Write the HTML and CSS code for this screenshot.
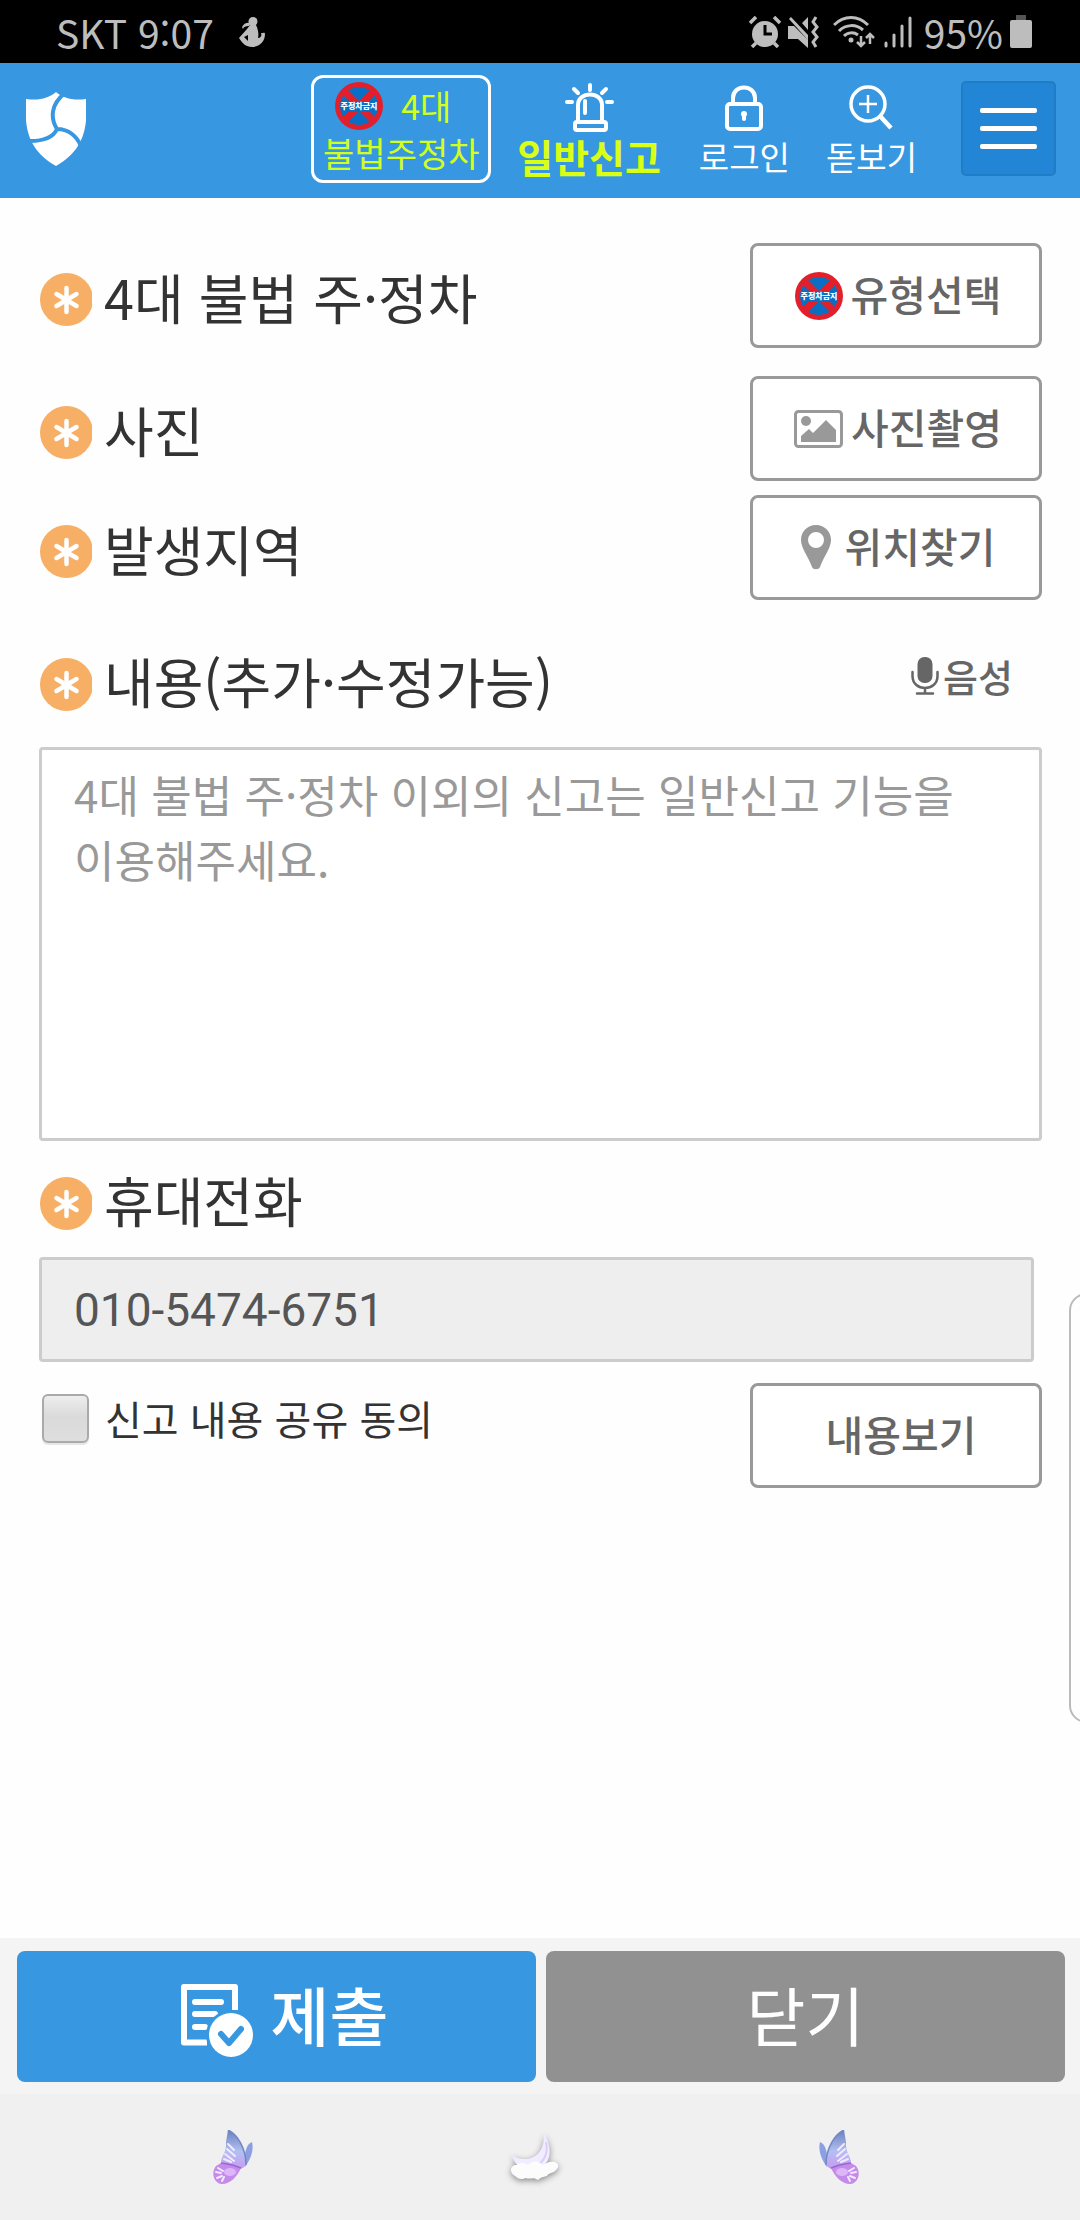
FILE: index.html
```html
<!DOCTYPE html>
<html lang="ko">
<head>
<meta charset="utf-8">
<meta name="viewport" content="width=device-width, initial-scale=1">
<title>4대 불법 주·정차 신고</title>
<link rel="stylesheet" href="styles.css">
</head>
<body>
<svg class="defs" width="0" height="0" aria-hidden="true">
  <symbol id="no-parking" viewBox="0 0 48 48">
    <circle cx="24" cy="24" r="24" fill="#e2202c"/>
    <circle cx="24" cy="24" r="19" fill="#0a6fc2"/>
    <path d="M10 10L38 38M38 10L10 38" stroke="#e2202c" stroke-width="7"/>
    <path d="M7 19h34v10H7z" fill="#0a6fc2"/>
  </symbol>
  <symbol id="required" viewBox="0 0 53 53">
    <circle cx="26.500" cy="26.500" r="26.500" fill="#f6af64"/>
    <path d="M26.500 15v24M16.500 21l20 12M36.500 21l-20 12" stroke="#fff" stroke-width="4.500" stroke-linecap="round"/>
  </symbol>
  <symbol id="butterfly" viewBox="0 0 40 55">
    <path d="M32 34C31 24 33 14 39 12C41 20 38 29 32 37Z" fill="#8b9fe2"/>
    <path d="M15 0C24 4 33 18 33 35C30 39 26 40 23 38L8 33C8 26 14 22 13 12Z" fill="url(#wing)"/>
    <path d="M15 0C24 4 33 18 33 35" fill="none" stroke="#7288c4" stroke-width="1.500"/>
    <path d="M8 33C16 33 24 35 28 38C24 47 17 54 9 54C0 53-2 42 3 36Z" fill="#c48bea"/>
    <path d="M28 38C19 34 14 34 8 33" fill="none" stroke="#9a68d0" stroke-width="1.500"/>
    <path d="M15 14l6 6M14 19l8 7M12 24l9 7M11 29l7 3M5 38l5 3M3 42l5 1M4 48l5-2M9 51l2-4" stroke="#f3e9ff" stroke-width="2" stroke-linecap="round"/>
    <ellipse cx="17" cy="42" rx="6" ry="4" fill="#dcb6f8"/>
  </symbol>
  <linearGradient id="wing" x1="0" y1="0" x2="0" y2="1">
    <stop offset="0" stop-color="#6a80bd"/><stop offset=".55" stop-color="#b3c0f3"/><stop offset="1" stop-color="#c79af0"/>
  </linearGradient>
</svg>

<div class="status">
  <div class="status-side">
    <span>SKT 9:07</span>
    <svg class="santa" viewBox="0 0 26 30" width="26" height="30" fill="currentColor"><circle cx="14" cy="4.500" r="4.500"/><path d="M3 10C5 6 8 5 12 6L11 9C8 9 5 9 4 12ZM11 8h6c2 4 3 9 2 13c3 0 4-3 3-5c2 0 4-1 4 1c0 8-6 13-13 13C7 30 3 26 0 21l8-9Zm-6 12l4 4l0-6Z" fill-rule="evenodd"/></svg>
  </div>
  <div class="status-side status-icons">
    <svg viewBox="0 0 32 32" width="32" height="32" fill="none" stroke="currentColor"><circle cx="16" cy="18" r="13" fill="currentColor" stroke="none"/><path d="M1 7L7 1M25 1l6 6M7 27l-4 4M25 27l4 4" stroke-width="3.500"/><path d="M16 9v9h7" stroke="#000" stroke-width="3"/></svg>
    <svg viewBox="0 0 32 32" width="32" height="32" fill="currentColor"><path d="M0 10h6L20 24v8L10 23H0ZM14 7l6-6v13ZM1 3l2-2L20 19v5Z"/><path d="M28 1l-3 5l4 5l-4 5l4 5l-4 5l3 5" fill="none" stroke="currentColor" stroke-width="3"/></svg>
    <svg class="wifi" viewBox="0 0 42 32" width="42" height="32" fill="none" stroke="currentColor" stroke-width="3"><path d="M1 9C11-1 25-1 35 9M6 15c7-7 17-7 24-1M11 20c4-4 10-4 14-1"/><circle cx="18" cy="24" r="2.500" fill="currentColor" stroke="none"/><path d="M28 20v10M24 26l4 4l4-4M37 28V18M33 22l4-4l4 4" stroke-width="2.500"/></svg>
    <svg class="signal" viewBox="0 0 28 32" width="28" height="32" stroke="currentColor" stroke-width="3" stroke-linecap="round"><path d="M2 27v3M10 19v11M18 10v20M26 2v28"/></svg>
    <span class="percent">95%</span>
    <svg viewBox="0 0 22 33" width="22" height="33"><path d="M6 0h10v6H6z" fill="#555"/><rect y="5" width="22" height="28" rx="2" fill="currentColor"/></svg>
  </div>
</div>

<header class="topbar">
  <a class="logo" href="#" aria-label="안전신문고 홈">
    <svg viewBox="0 0 60 74" width="60" height="74"><path d="M30 0C37 6 47 9 60 7C62 36 58 58 30 74C2 58-2 36 0 7C13 9 23 6 30 0Z" fill="#fff"/><path d="M39 1C25 12 24 26 31 37M4 49C17 49 27 46 31 37M31 37C43 37 51 45 55 54" fill="none" stroke="#3897e1" stroke-width="4"/></svg>
  </a>
  <nav class="menu">
    <a class="badge" href="#">
      <span class="badge-top"><svg class="sign" width="48" height="48"><use href="#no-parking"/><text x="24" y="27" text-anchor="middle">주정차금지</text></svg>4대</span>
      <span>불법주정차</span>
    </a>
    <a class="item item-active" href="#">
      <svg viewBox="0 0 49 49" width="49" height="49" fill="none" stroke="currentColor" stroke-width="4" stroke-linecap="round"><path d="M13 38V22C13 8 37 8 37 22V38M20 18v12"/><rect x="10" y="39" width="31" height="8" rx="2"/><path d="M25 2v5M9 6l4 4M41 6l-4 4M2 19h5M42 19h5"/></svg>
      <span>일반신고</span>
    </a>
    <a class="item" href="#">
      <svg viewBox="0 0 38 49" width="38" height="49" fill="none" stroke="currentColor" stroke-width="4"><rect x="2" y="21" width="34" height="25" rx="3"/><path d="M8 20V15C8 1 30 1 30 15v5"/><path d="M19 31v5" stroke-linecap="round"/><circle cx="19" cy="31" r="1"/></svg>
      <span>로그인</span>
    </a>
    <a class="item" href="#">
      <svg viewBox="0 0 44 49" width="44" height="49" fill="none" stroke="currentColor"><circle cx="19" cy="21" r="17" stroke-width="3.500"/><path d="M31 33l11 12" stroke-width="4.500"/><path d="M19 12v18M10 21h18" stroke-width="2.500"/></svg>
      <span>돋보기</span>
    </a>
    <button class="hamburger" type="button" aria-label="메뉴"><i></i><i></i><i></i></button>
  </nav>
</header>

<main class="form">
  <div class="row">
    <span class="label"><svg width="52" height="53" viewBox="0 0 52 53" aria-hidden="true"><use href="#required" width="53" height="53"/></svg>4대 불법 주·정차</span>
    <button class="action" type="button"><svg class="sign" width="48" height="48"><use href="#no-parking"/><text x="24" y="27" text-anchor="middle">주정차금지</text></svg>유형선택</button>
  </div>
  <div class="row row-gap">
    <span class="label"><svg width="52" height="53" viewBox="0 0 52 53" aria-hidden="true"><use href="#required" width="53" height="53"/></svg>사진</span>
    <button class="action" type="button"><svg viewBox="0 0 49 38" width="49" height="38" aria-hidden="true"><rect x="1.500" y="1.500" width="46" height="35" rx="3" fill="none" stroke="#999" stroke-width="3"/><circle cx="12" cy="11" r="5" fill="#999"/><path d="M7 32v-6l8-7l4 4L32 10l10 10v12Z" fill="#999"/></svg>사진촬영</button>
  </div>
  <div class="row row-tight">
    <span class="label"><svg width="52" height="53" viewBox="0 0 52 53" aria-hidden="true"><use href="#required" width="53" height="53"/></svg>발생지역</span>
    <button class="action action-pin" type="button"><svg viewBox="0 0 30 45" width="30" height="45" aria-hidden="true"><path d="M15 0C6 0 0 7 0 15c0 8 7 16 11 27c1 3 7 3 8 0C23 31 30 23 30 15C30 7 24 0 15 0Zm0 7a8 8 0 0 1 0 16a8 8 0 0 1 0-16Z" fill="#999" fill-rule="evenodd"/></svg>위치찾기</button>
  </div>
  <div class="row row-content">
    <label class="label" for="content"><svg width="52" height="53" viewBox="0 0 52 53" aria-hidden="true"><use href="#required" width="53" height="53"/></svg>내용(추가·수정가능)</label>
    <button class="voice" type="button"><svg viewBox="0 0 28 38" width="28" height="38" fill="none" stroke="currentColor" stroke-width="2.500" stroke-linecap="round" aria-hidden="true"><rect x="6.500" y="0" width="15" height="26" rx="7" fill="currentColor" stroke="none"/><path d="M1.500 15v4c0 16 25 16 25 0v-4M14 31v5M6 36.500h16"/></svg>음성</button>
  </div>
  <textarea class="content" id="content" placeholder="4대 불법 주·정차 이외의 신고는 일반신고 기능을 이용해주세요."></textarea>
  <div class="row row-phone">
    <label class="label" for="phone"><svg width="52" height="53" viewBox="0 0 52 53" aria-hidden="true"><use href="#required" width="53" height="53"/></svg>휴대전화</label>
  </div>
  <input class="phone" id="phone" type="tel" value="010-5474-6751" readonly>
  <div class="row row-agree">
    <div class="agree">
      <input class="check" id="agree" type="checkbox">
      <label for="agree">신고 내용 공유 동의</label>
    </div>
    <button class="action action-plain" type="button">내용보기</button>
  </div>
</main>
<div class="edge-handle"></div>

<footer class="submit-bar">
  <button class="submit" type="button"><svg viewBox="0 0 72 73" width="72" height="73" aria-hidden="true" fill="none" stroke="#fff" stroke-linecap="round"><path d="M26 58.500H3V3H54V26" stroke-width="6" stroke-linecap="butt" stroke-linejoin="round"/><path d="M14 18H40M14 30H34M14 43H24" stroke-width="6"/><circle cx="50" cy="51" r="25" fill="#3897e1" stroke="none"/><circle cx="50" cy="51" r="22" fill="#fff" stroke="none"/><path d="M40 50l8 9l12-14" stroke="#3897e1" stroke-width="6" stroke-linejoin="round"/></svg>제출</button>
  <button class="close" type="button">닫기</button>
</footer>

<nav class="system-nav">
  <button type="button" aria-label="최근 앱"><svg viewBox="0 0 40 55" width="40" height="55"><use href="#butterfly"/></svg></button>
  <button type="button" aria-label="홈"><svg class="moon" viewBox="0 0 50 46" width="50" height="46"><path d="M33 0C42 14 40 28 30 34H10C6 32 3 27 1 22C18 30 34 22 33 0Z" fill="#f1ecff"/><path d="M35 8C38 20 32 29 24 32" fill="none" stroke="#d9cef5" stroke-width="2"/><path d="M4 42C-3 38 0 30 6 31C9 27 15 29 17 31C22 26 29 27 31 31C35 30 36 28 40 28C46 27 50 32 45 36C42 40 38 38 36 42C32 43 30 43 27 46C22 42 19 46 15 44C10 46 7 45 4 42Z" fill="#fcfcfd"/></svg></button>
  <button type="button" aria-label="뒤로"><svg viewBox="0 0 40 55" width="40" height="55"><use href="#butterfly" transform="translate(40 0) scale(-1 1)"/></svg></button>
</nav>
</body>
</html>
```
FILE: styles.css
```css
* { box-sizing: border-box; }

body {
  display: flex;
  flex-direction: column;
  min-height: 100vh;
  margin: 0;
  background: #fefefe;
  color: #333;
  font-family: "Noto Sans CJK KR", "Noto Sans", sans-serif;
}

button, input, textarea { font-family: inherit; }
button { border: 0; padding: 0; background: none; cursor: pointer; }
a { color: inherit; text-decoration: none; }
svg { flex: none; display: block; }
.defs { position: absolute; }
.sign text { fill: #fff; font-size: 8px; font-weight: 900; }

/* Phone status bar */
.status {
  display: flex;
  justify-content: space-between;
  height: 63px;
  padding: 0 48px 0 56px;
  background: #000;
  color: #bdbdbd;
  font-size: 39px;
  line-height: 60px;
}
.status-side { display: flex; align-items: center; }
.santa { margin-left: 25px; }
.status-icons { gap: 7px; }
.wifi { margin-left: 6px; }
.signal { margin-left: 2px; }
.percent { margin-left: 5px; }

/* App header */
.topbar {
  display: flex;
  align-items: center;
  justify-content: space-between;
  height: 135px;
  padding: 0 24px 4px 26px;
  background: #3897e1;
  color: #fff;
}
.menu { display: flex; align-items: center; font-size: 33px; line-height: 38px; }
.badge {
  display: flex;
  flex-direction: column;
  align-items: center;
  width: 180px;
  height: 108px;
  margin-right: 8px;
  border: 3px solid #fff;
  border-radius: 12px;
  color: #d2ff1e;
  font-size: 34px;
}
.badge-top { display: flex; align-items: center; gap: 18px; height: 56px; margin-right: 16px; }
.item {
  display: flex;
  flex-direction: column;
  align-items: center;
  gap: 5px;
  padding: 0 18px;
}
.item-active { margin-right: 2px; }
.item-active span { color: #d9ff14; font-size: 39px; font-weight: 700; }
.hamburger {
  display: flex;
  flex-direction: column;
  align-items: center;
  justify-content: center;
  gap: 13px;
  width: 95px;
  height: 95px;
  margin-left: 26px;
  border: 2px solid #1f7cc6;
  border-radius: 5px;
  background: #2385d5;
}
.hamburger i { width: 57px; height: 5px; border-radius: 2px; background: #fff; }

/* Report form */
.form { flex: 1; padding: 45px 38px 0 39px; }
.row { display: flex; align-items: center; justify-content: space-between; }
.row-gap { margin-top: 28px; }
.row-tight { margin-top: 14px; }
.row-content { margin: 49px 0 36px; }
.row-phone { margin: 27px 0; }
.row-agree { align-items: flex-start; margin-top: 21px; }
.label {
  display: flex;
  align-items: center;
  gap: 12px;
  padding-top: 2px;
  font-size: 54px;
  line-height: 60px;
  white-space: nowrap;
}
.label svg { margin: 6px 0 0 1px; }
.action {
  display: flex;
  align-items: center;
  justify-content: center;
  gap: 8px;
  width: 292px;
  height: 105px;
  padding: 0 0 6px 4px;
  border: 3px solid #999;
  border-radius: 8px;
  background: #fff;
  color: #666;
  font-size: 41px;
  font-weight: 500;
  line-height: 48px;
}
.action svg { margin-top: 6px; }
.action-pin { gap: 14px; }
.action-plain { padding-left: 10px; }
.voice {
  display: flex;
  align-items: center;
  gap: 4px;
  margin-right: 29px;
  padding-bottom: 8px;
  color: #666;
  font-size: 38px;
  font-weight: 500;
  line-height: 48px;
}
.content {
  display: block;
  width: 100%;
  height: 394px;
  padding: 12px 32px;
  border: 3px solid #ccc;
  border-radius: 4px;
  background: #fff;
  color: #333;
  font-size: 44px;
  line-height: 65px;
  word-break: keep-all;
  resize: none;
}
.content::placeholder { color: #999; opacity: 1; }
.phone {
  display: block;
  width: calc(100% - 8px);
  height: 105px;
  padding: 0 32px;
  border: 3px solid #ccc;
  border-radius: 4px;
  background: #eee;
  color: #555;
  font-family: Roboto, sans-serif;
  font-size: 46px;
}
.agree {
  display: flex;
  align-items: center;
  gap: 16px;
  padding: 11px 0 0 3px;
  font-size: 40px;
  line-height: 49px;
}
.check {
  appearance: none;
  width: 47px;
  height: 49px;
  margin: 0;
  border: 2px solid #aaa;
  border-radius: 6px;
  background: linear-gradient(#eee, #dadada 45%, #dedede);
  box-shadow: 0 2px 1px #e6e6e6;
}

/* Edge panel grip that overlaps the right side of the screen */
.edge-handle {
  position: fixed;
  top: 1293px;
  right: -24px;
  width: 35px;
  height: 430px;
  border: 2px solid #bbb;
  border-radius: 18px;
  background: #fefefe;
}

/* Bottom actions */
.submit-bar {
  display: grid;
  grid-template-columns: 1fr 1fr;
  gap: 10px;
  padding: 13px 15px 12px 17px;
  background: #f4f4f4;
}
.submit, .close {
  display: flex;
  align-items: center;
  justify-content: center;
  gap: 18px;
  height: 131px;
  padding-bottom: 8px;
  border-radius: 8px;
  color: #fff;
  font-size: 64px;
  line-height: 80px;
}
.submit { padding-left: 16px; background: #3897e1; font-weight: 500; }
.submit svg { margin-top: 16px; }
.close { background: #919191; }

.system-nav {
  display: flex;
  align-items: center;
  justify-content: space-between;
  height: 126px;
  padding: 0 221px 0 213px;
  background: #f0f0f0;
}
.moon { filter: drop-shadow(0 2px 3px #888); overflow: visible; }
```
